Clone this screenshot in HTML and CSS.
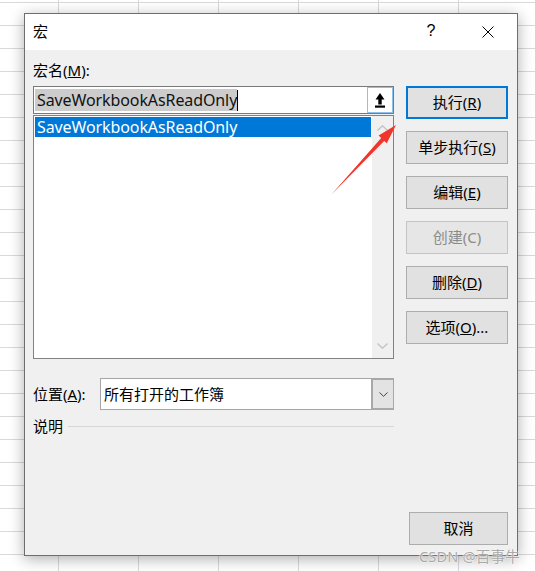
FILE: index.html
```html
<!DOCTYPE html>
<html lang="zh-CN">
<head>
<meta charset="utf-8">
<title>宏</title>
<link rel="stylesheet" href="styles.css">
</head>
<body>
<div class="dialog">
  <div class="titlebar">
    <span class="title">宏</span>
    <span class="cap help">?</span>
    <span class="cap close">
      <svg width="12" height="12" viewBox="0 0 12 12"><path d="M0.5 0.5 L11.5 11.5 M11.5 0.5 L0.5 11.5" stroke="#000" stroke-width="1" fill="none"/></svg>
    </span>
  </div>
  <div class="content">
    <div class="main">
      <div class="leftcol">
        <div class="label">宏名(<u>M</u>):</div>
        <div class="namebox">
          <span class="nametext"><span class="sel">SaveWorkbookAsReadOnly</span><span class="caret"></span></span>
          <span class="upbtn">
            <svg width="10" height="15" viewBox="0 0 10 15"><polygon points="5,0 0.5,6.5 9.5,6.5" fill="#000"/><rect x="3.3" y="6" width="3.4" height="5.5" fill="#000"/><rect x="0" y="12.5" width="10" height="2.2" fill="#000"/></svg>
          </span>
        </div>
        <div class="list">
          <div class="items">
            <div class="item selected">SaveWorkbookAsReadOnly</div>
          </div>
          <div class="scroll">
            <svg class="chev" width="11" height="6" viewBox="0 0 11 6"><path d="M0.5 5.5 L5.5 0.8 L10.5 5.5" stroke="#c2c2c2" stroke-width="1.3" fill="none"/></svg>
            <svg class="chev" width="11" height="6" viewBox="0 0 11 6"><path d="M0.5 0.5 L5.5 5.2 L10.5 0.5" stroke="#c2c2c2" stroke-width="1.3" fill="none"/></svg>
          </div>
        </div>
        <div class="locrow">
          <span class="loclabel">位置(<u>A</u>):</span>
          <div class="combo">
            <span class="combotext">所有打开的工作簿</span>
            <span class="dropbtn">
              <svg width="9" height="5" viewBox="0 0 9 5"><path d="M0.5 0.5 L4.5 4.3 L8.5 0.5" stroke="#444" stroke-width="1" fill="none"/></svg>
            </span>
          </div>
        </div>
        <div class="descrow">
          <span>说明</span>
          <span class="rule"></span>
        </div>
      </div>
      <div class="rightcol">
        <div class="btn primary">执行(<u>R</u>)</div>
        <div class="btn">单步执行(<u>S</u>)</div>
        <div class="btn">编辑(<u>E</u>)</div>
        <div class="btn disabled">创建(C)</div>
        <div class="btn">删除(<u>D</u>)</div>
        <div class="btn">选项(<u>O</u>)...</div>
      </div>
    </div>
    <div class="footer">
      <div class="btn cancel">取消</div>
    </div>
  </div>
  <svg class="arrow" width="535" height="571" viewBox="0 0 535 571">
    <polygon points="331,195 381.2,138.1 378.6,135.6 396,125 386.8,143.2 384.2,140.9" fill="#f2352b"/>
  </svg>
</div>
<div class="watermark">CSDN @百事牛</div>
</body>
</html>
```

FILE: styles.css
```css
html, body {
  margin: 0;
  padding: 0;
}
body {
  width: 535px;
  height: 571px;
  overflow: hidden;
  position: relative;
  background-color: #ffffff;
  background-image:
    linear-gradient(to right, #d9d9d9 1px, transparent 1px),
    linear-gradient(to bottom, #d9d9d9 1px, transparent 1px);
  background-size: 80px 100%, 100% 23px;
  background-position: 58px 0, 0 2px;
  font-family: "Noto Sans", "Noto Sans CJK SC", sans-serif;
  font-size: 15px;
  color: #000;
}
.dialog {
  position: relative;
  box-sizing: border-box;
  width: 494px;
  height: 543px;
  margin: 13px 0 0 24px;
  border: 1px solid #6e6e6e;
  background: #f0f0f0;
  box-shadow: 0 3px 14px rgba(0, 0, 0, 0.32);
  display: flex;
  flex-direction: column;
}
.titlebar {
  height: 36px;
  background: #ffffff;
  display: flex;
  align-items: center;
  flex: none;
}
.title {
  padding-left: 8px;
  flex: 1;
  line-height: 20px;
  padding-bottom: 2px;
}
.cap {
  display: flex;
  align-items: center;
  justify-content: center;
  height: 36px;
}
.help {
  width: 56px;
  font-size: 16px;
  font-family: "Liberation Sans", sans-serif;
  color: #000;
  padding-bottom: 2px;
  box-sizing: border-box;
}
.close {
  width: 58px;
}
.content {
  flex: 1;
  display: flex;
  flex-direction: column;
  padding: 10px 9px 10px 8px;
}
.main {
  display: grid;
  grid-template-columns: 361px 102px;
  column-gap: 12px;
  align-items: start;
}
.leftcol {
  display: flex;
  flex-direction: column;
}
.label {
  line-height: 20px;
  height: 20px;
}
.namebox {
  margin-top: 6px;
  box-sizing: border-box;
  height: 28px;
  border: 1px solid #7a7a7a;
  background: #ffffff;
  display: flex;
  align-items: center;
  padding-left: 1px;
}
.nametext {
  flex: 1;
  display: flex;
  align-items: center;
  font-size: 16px;
  letter-spacing: -0.1px;
}
.sel {
  background: #cccccc;
  line-height: 22px;
  padding: 0 0 0 2px;
  color: #111;
}
.caret {
  width: 1px;
  height: 21px;
  background: #000;
}
.upbtn {
  box-sizing: border-box;
  width: 26px;
  height: 26px;
  border: 1px solid #8fc0ea;
  background: #ffffff;
  display: flex;
  align-items: center;
  justify-content: center;
}
.list {
  margin-top: 1px;
  box-sizing: border-box;
  height: 244px;
  border: 1px solid #828282;
  background: #ffffff;
  display: flex;
}
.items {
  flex: 1;
  padding: 1px;
}
.item {
  height: 20px;
  line-height: 20px;
  padding-left: 2px;
  font-size: 16px;
  letter-spacing: -0.1px;
}
.selected {
  background: #0078d7;
  color: #ffffff;
}
.scroll {
  width: 21px;
  background: #f0f0f0;
  display: flex;
  flex-direction: column;
  justify-content: space-between;
  align-items: center;
  padding: 9px 0 9px;
}
.chev {
  display: block;
}
.locrow {
  margin-top: 19px;
  display: flex;
  align-items: center;
}
.loclabel {
  width: 67px;
  flex: none;
  padding-bottom: 2px;
}
.combo {
  flex: 1;
  box-sizing: border-box;
  height: 32px;
  border: 1px solid #a6a6a6;
  background: #ffffff;
  display: flex;
  align-items: stretch;
}
.combotext {
  flex: 1;
  padding-left: 3px;
  padding-bottom: 2px;
  display: flex;
  align-items: center;
}
.dropbtn {
  width: 20px;
  background: #e3e3e3;
  border: 2px solid #a8a8a8;
  border-right-width: 1px;
  margin: -1px -1px -1px 0;
  display: flex;
  align-items: center;
  justify-content: center;
}
.descrow {
  margin-top: 6px;
  display: flex;
  align-items: center;
  gap: 5px;
  line-height: 20px;
}
.rule {
  flex: 1;
  height: 1px;
  background: #d6d6d6;
}
.rightcol {
  margin-top: 26px;
  display: flex;
  flex-direction: column;
  gap: 12px;
}
.btn {
  box-sizing: border-box;
  height: 33px;
  border: 1px solid #adadad;
  background: #e1e1e1;
  display: flex;
  align-items: center;
  justify-content: center;
  padding-bottom: 2px;
}
.btn.primary {
  border: 2px solid #0078d7;
}
.btn.disabled {
  color: #8c8c8c;
  border-color: #c4c4c4;
  background: #e6e6e6;
}
.footer {
  margin-top: auto;
  display: flex;
  justify-content: flex-end;
}
.cancel {
  width: 99px;
}
.arrow {
  position: absolute;
  left: -25px;
  top: -14px;
  pointer-events: none;
}
.watermark {
  position: absolute;
  left: 419px;
  top: 547px;
  font-size: 14.5px;
  line-height: 18px;
  color: #a9a9a9;
  text-shadow: 0 0 2px #ffffff, 0 0 1px #ffffff;
  letter-spacing: 0.2px;
}
```
